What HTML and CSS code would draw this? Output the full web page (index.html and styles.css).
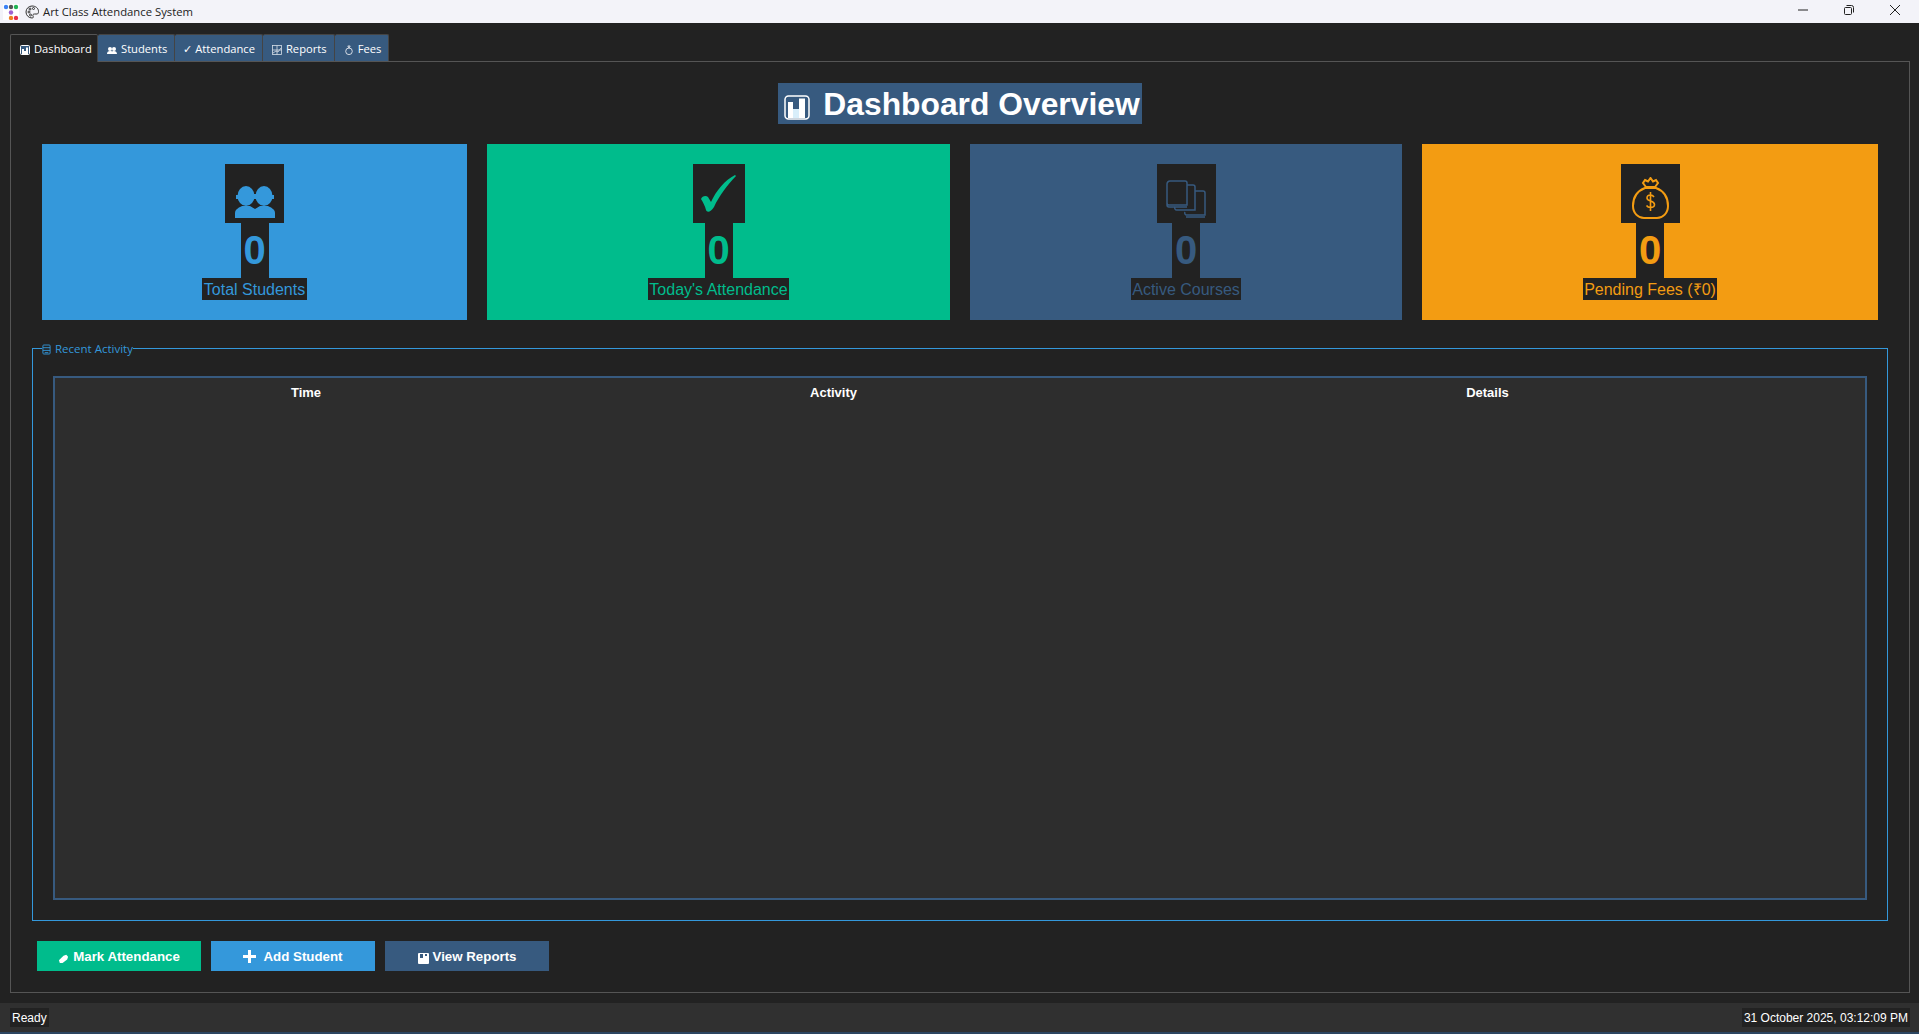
FILE: index.html
```html
<!DOCTYPE html>
<html lang="en">
<head>
    <meta charset="UTF-8">
    <title>Art Class Attendance System</title>
    <link rel="stylesheet" href="styles.css">
</head>
<body>
    <header class="titlebar">
        <svg class="app-icon" width="16" height="16" viewBox="0 0 16 16">
            <rect width="16" height="16" fill="#fff"/>
            <circle cx="3" cy="3" r="2.200" fill="#3b82f6"/><circle cx="8" cy="3" r="2.200" fill="#555"/><circle cx="13" cy="3" r="2.200" fill="#22b455"/>
            <circle cx="8" cy="8.500" r="2.200" fill="#a060d0"/>
            <circle cx="8" cy="14" r="2.200" fill="#f08020"/><circle cx="13" cy="14" r="2.200" fill="#e8304a"/>
        </svg>
        <svg class="palette" width="14" height="14" viewBox="0 0 14 14" fill="none" stroke="#333" stroke-width="1">
            <path d="M7 1a6 6 0 1 0 0 12c1.500 0 1.500-1 1-2s0-2 1.500-2H12c1 0 1.500-1 1.500-2.500C13.500 3 10.500 1 7 1z"/>
            <circle cx="4" cy="7" r="1"/><circle cx="5" cy="4" r="1"/><circle cx="8.500" cy="3.500" r="1"/><circle cx="5.500" cy="10" r="1"/>
        </svg>
        <span class="window-title">Art Class Attendance System</span>
        <div class="window-controls">
            <svg width="12" height="12" viewBox="0 0 12 12"><path d="M1 6h10" stroke="#222" fill="none"/></svg>
            <svg width="12" height="12" viewBox="0 0 12 12" fill="none" stroke="#222"><rect x="1.500" y="3.500" width="7" height="7" rx="1"/><path d="M3.500 1.500h5a2 2 0 0 1 2 2v5"/></svg>
            <svg width="12" height="12" viewBox="0 0 12 12"><path d="M1 1l10 10M11 1L1 11" stroke="#222" fill="none"/></svg>
        </div>
    </header>

    <div class="content">
        <nav class="tabs">
            <div class="tab active">
                <svg class="tab-icon" viewBox="0 0 10 10"><rect x=".5" y=".5" width="9" height="9" rx="1" fill="#375a7f" stroke="#fff"/><path d="M2 4h2v5H2zM4 6h2v3H4zM6 2.500h2V9H6z" fill="#fff"/></svg>
                Dashboard
            </div>
            <div class="tab">
                <svg class="tab-icon" viewBox="0 0 10 10" fill="#fff"><circle cx="3" cy="4" r="2"/><circle cx="7" cy="4" r="2"/><path d="M0 9c0-2 1-3 3-3s2 .5 2 .5.500-.5 2-.5 3 1 3 3z"/></svg>
                Students
            </div>
            <div class="tab tab-plain">✓ Attendance</div>
            <div class="tab">
                <svg class="tab-icon" viewBox="0 0 10 10" fill="none" stroke="#d8e0e8" stroke-width=".8"><rect x=".5" y=".5" width="9" height="9"/><path d="M.5 5h9M5 .5v9M1 8l3-2 2 1 3-4"/></svg>
                Reports
            </div>
            <div class="tab">
                <svg class="tab-icon" viewBox="0 0 10 10" fill="none" stroke="#e4e8ee" stroke-width=".9"><circle cx="5" cy="6.300" r="3.300"/><path d="M3.800 1h2.400L5 3z"/></svg>
                Fees
            </div>
        </nav>

        <main class="pane">
            <div class="page-heading">
                <h1>
                    <svg class="heading-icon" viewBox="0 0 26 25">
                        <rect x="1" y="1" width="24" height="23" rx="3.500" fill="#375a7f" stroke="#fff" stroke-width="1.500"/>
                        <path d="M4 7h5v16H4z" fill="#fff"/><path d="M9 14h6v9H9z" fill="#d8eefa"/><path d="M15 3.500h6V23h-6z" fill="#fff"/>
                    </svg>
                    Dashboard Overview
                </h1>
            </div>

            <section class="cards">
                <div class="card card-blue">
                    <span class="card-icon">
                        <svg width="40" height="32" viewBox="0 0 40 32" fill="currentColor">
                            <ellipse cx="11" cy="10" rx="8.500" ry="10"/><ellipse cx="29" cy="10" rx="8.500" ry="10"/>
                            <path d="M1 9h3v4H1zM36 9h3v4h-3zM18 8h4v5h-4z"/>
                            <path d="M0 32v-5c0-4 5-6 7-7h8l5 3 5-3h8c2 1 7 3 7 7v5z"/>
                        </svg>
                    </span>
                    <span class="card-value">0</span>
                    <span class="card-label">Total Students</span>
                </div>
                <div class="card card-green">
                    <span class="card-icon icon-check">
                        <svg width="35" height="37" viewBox="0 0 35 37" fill="currentColor">
                            <path d="M0 24C1 21 5 20 7 22L10 27C15 16 24 5 34 0L35 1C27 9 18 21 13 32C10 37 6 38 5 35C4 31 2 27 0 24z"/>
                        </svg>
                    </span>
                    <span class="card-value">0</span>
                    <span class="card-label">Today's Attendance</span>
                </div>
                <div class="card card-navy">
                    <span class="card-icon">
                        <svg width="40" height="38" viewBox="0 0 40 38" fill="none" stroke="currentColor" stroke-width="1.500">
                            <path d="M4 1h15a2 2 0 0 1 2 2v22H3a2 2 0 0 1-2-2V4a3 3 0 0 1 3-3zM1 23v2a2 2 0 0 0 2 2h18"/>
                            <path d="M21 5h6a2 2 0 0 1 2 2v23H11a2 2 0 0 1-2-3"/>
                            <path d="M29 11h8a2 2 0 0 1 2 2v22H21a2 2 0 0 1-2-3M20 37h19"/>
                        </svg>
                    </span>
                    <span class="card-value">0</span>
                    <span class="card-label">Active Courses</span>
                </div>
                <div class="card card-orange">
                    <span class="card-icon icon-bag">
                        <svg width="37" height="42" viewBox="0 0 37 42" fill="none" stroke="currentColor" stroke-width="2">
                            <path d="M13 3l3 1.500L18.500 1 21 4.500 24 3l2 3-3 4H14l-3-4z"/>
                            <path d="M13 11C5 14 1 21 1 29c0 7 5 12 11 12h13c6 0 11-5 11-12 0-8-4-15-12-18z"/>
                            <path d="M22 20c-1-1.500-2-2-3.500-2-2 0-3.500 1-3.500 3 0 4 7.500 2 7.500 6.500 0 2-1.500 3-4 3-1.500 0-3-.5-4-2M18.500 15v19" stroke-width="1.600"/>
                        </svg>
                    </span>
                    <span class="card-value">0</span>
                    <span class="card-label">Pending Fees (₹0)</span>
                </div>
            </section>

            <fieldset class="activity">
                <legend>
                    <svg class="legend-icon" viewBox="0 0 10 12" fill="none" stroke="#3498db"><rect x="1" y="1" width="8" height="10" rx="1"/><path d="M1 4h8M1 7h8M3 9.500h4"/></svg>
                    Recent Activity
                </legend>
                <div class="table-box">
                    <table>
                        <thead>
                            <tr>
                                <th class="col-time">Time</th>
                                <th class="col-activity">Activity</th>
                                <th>Details</th>
                            </tr>
                        </thead>
                        <tbody></tbody>
                    </table>
                </div>
            </fieldset>

            <div class="actions">
                <button class="btn btn-green">
                    <svg class="btn-icon" viewBox="0 0 12 12" fill="#fff"><path d="M1 8l5-5 3-1 2 2-1 3-5 4H2z"/></svg>
                    Mark Attendance
                </button>
                <button class="btn btn-blue">
                    <svg class="btn-plus" viewBox="0 0 13 13" fill="#fff"><path d="M5 0h3v5h5v3H8v5H5V8H0V5h5z"/></svg>
                    Add Student
                </button>
                <button class="btn btn-navy">
                    <svg class="btn-icon" viewBox="0 0 11 11"><rect width="11" height="11" rx="1" fill="#fff"/><path d="M2 1h3v4H2zM7 1h2v2H7z" fill="#375a7f"/></svg>
                    View Reports
                </button>
            </div>
        </main>
    </div>

    <footer class="statusbar">
        <span class="status-text">Ready</span>
        <span class="status-text">31 October 2025, 03:12:09 PM</span>
    </footer>
</body>
</html>
```

FILE: styles.css
```css
* {
    box-sizing: border-box;
}

html, body {
    height: 100%;
}

body {
    margin: 0;
    display: flex;
    flex-direction: column;
    overflow: hidden;
    background-color: #222222;
    color: #ffffff;
    font-family: "Liberation Sans", sans-serif;
}

.titlebar {
    height: 23px;
    flex: none;
    display: flex;
    align-items: center;
    padding-left: 3px;
    background-color: #f3f3f9;
    color: #222222;
}

.app-icon {
    margin-right: 6px;
}

.palette {
    margin-right: 4px;
}

.window-title {
    font-family: "Open Sans", sans-serif;
    font-size: 11.3px;
}

.window-controls {
    margin-left: auto;
    display: flex;
    gap: 34px;
    padding: 0 18px 3px 0;
}

.content {
    flex: 1;
    min-height: 0;
    display: flex;
    flex-direction: column;
    padding: 11px 9px 0 10px;
}

.tabs {
    display: flex;
    height: 27px;
    flex: none;
    font-family: "Open Sans", sans-serif;
    font-size: 11.2px;
}

.tab {
    display: flex;
    align-items: center;
    gap: 4px;
    padding: 0 7px 0 9px;
    background-color: #375a7f;
    border: 1px solid #444444;
    border-bottom: none;
    border-left: none;
    border-radius: 2px 2px 0 0;
}

.tab-plain {
    padding: 0 7px 0 8px;
}

.tab.active {
    width: 88px;
    background-color: #222222;
    border-left: 1px solid #555555;
    border-top-color: #555555;
    position: relative;
    z-index: 1;
    margin-bottom: -1px;
}

.tab-icon {
    width: 10px;
    height: 10px;
    flex: none;
    margin-top: 3px;
}

.pane {
    flex: 1;
    min-height: 0;
    display: flex;
    flex-direction: column;
    padding: 21px;
    border: 1px solid #555555;
}

.page-heading {
    display: flex;
    justify-content: center;
    margin-bottom: 20px;
}

h1 {
    margin: 0;
    height: 41px;
    display: flex;
    align-items: center;
    gap: 13px;
    padding: 2px 2px 0 6px;
    background-color: #375a7f;
    font-size: 31.8px;
    font-weight: bold;
    white-space: nowrap;
}

.heading-icon {
    width: 26px;
    height: 25px;
    margin-top: 6px;
}

.cards {
    display: grid;
    grid-template-columns: 425fr 463fr 432fr 456fr;
    gap: 20px;
    margin: 0 10px 21px 10px;
}

.card {
    height: 176px;
    display: flex;
    flex-direction: column;
    align-items: center;
    padding-top: 20px;
}

.card-blue {
    background-color: #3498db;
    color: #3498db;
}

.card-green {
    background-color: #00bc8c;
    color: #00bc8c;
}

.card-navy {
    background-color: #375a7f;
    color: #375a7f;
}

.card-orange {
    background-color: #f39c12;
    color: #f39c12;
}

.card-icon {
    width: 59px;
    height: 59px;
    display: flex;
    align-items: flex-end;
    justify-content: center;
    padding-bottom: 5px;
    background-color: #222222;
}

.icon-check {
    width: 52px;
    padding-bottom: 11px;
}

.icon-bag {
    padding-bottom: 4px;
}

.card-value {
    width: 28px;
    height: 55px;
    display: flex;
    align-items: center;
    justify-content: center;
    background-color: #222222;
    font-size: 40px;
    font-weight: bold;
}

.card-label {
    height: 22px;
    padding: 0 1.500px;
    background-color: #222222;
    font-size: 16px;
    line-height: 24px;
    white-space: nowrap;
}

.activity {
    flex: 1;
    min-height: 0;
    min-width: 0;
    margin: 0;
    display: flex;
    flex-direction: column;
    padding: 20px;
    border: 1px solid #3498db;
}

legend {
    margin-left: -11px;
    padding: 0;
    color: #3498db;
    font-family: "Open Sans", sans-serif;
    font-size: 11.5px;
    display: flex;
    align-items: center;
    gap: 4px;
}

.legend-icon {
    width: 9px;
    height: 11px;
    margin-top: 2px;
}

.table-box {
    flex: 1;
    min-height: 0;
    background-color: #2d2d2d;
    border: 2px solid #375a7f;
}

table {
    width: 100%;
    border-collapse: collapse;
    table-layout: fixed;
}

th {
    height: 29px;
    padding: 0;
    font-size: 13px;
    font-weight: bold;
    text-align: center;
}

.col-time {
    width: 502px;
}

.col-activity {
    width: 553px;
}

.actions {
    display: flex;
    gap: 10px;
    flex: none;
    margin: 20px 0 0 5px;
}

.btn {
    width: 164px;
    height: 30px;
    display: flex;
    align-items: center;
    justify-content: center;
    gap: 4px;
    padding: 0;
    border: none;
    color: #ffffff;
    font-family: "Liberation Sans", sans-serif;
    font-size: 13.3px;
    font-weight: bold;
    cursor: pointer;
}

.btn-green {
    background-color: #00bc8c;
}

.btn-blue {
    background-color: #3498db;
    gap: 7px;
}

.btn-navy {
    background-color: #375a7f;
}

.btn-icon {
    width: 11px;
    height: 11px;
    margin-top: 4px;
}

.btn-plus {
    width: 13px;
    height: 13px;
}

.statusbar {
    height: 31px;
    flex: none;
    margin-top: 10px;
    display: flex;
    align-items: center;
    justify-content: space-between;
    padding: 0 9px 0 10px;
    background-color: #303030;
    border-bottom: 2px solid #2c4560;
    font-size: 12px;
}

.status-text {
    height: 19px;
    padding: 0 2px;
    line-height: 21px;
    background-color: #222222;
}
```
